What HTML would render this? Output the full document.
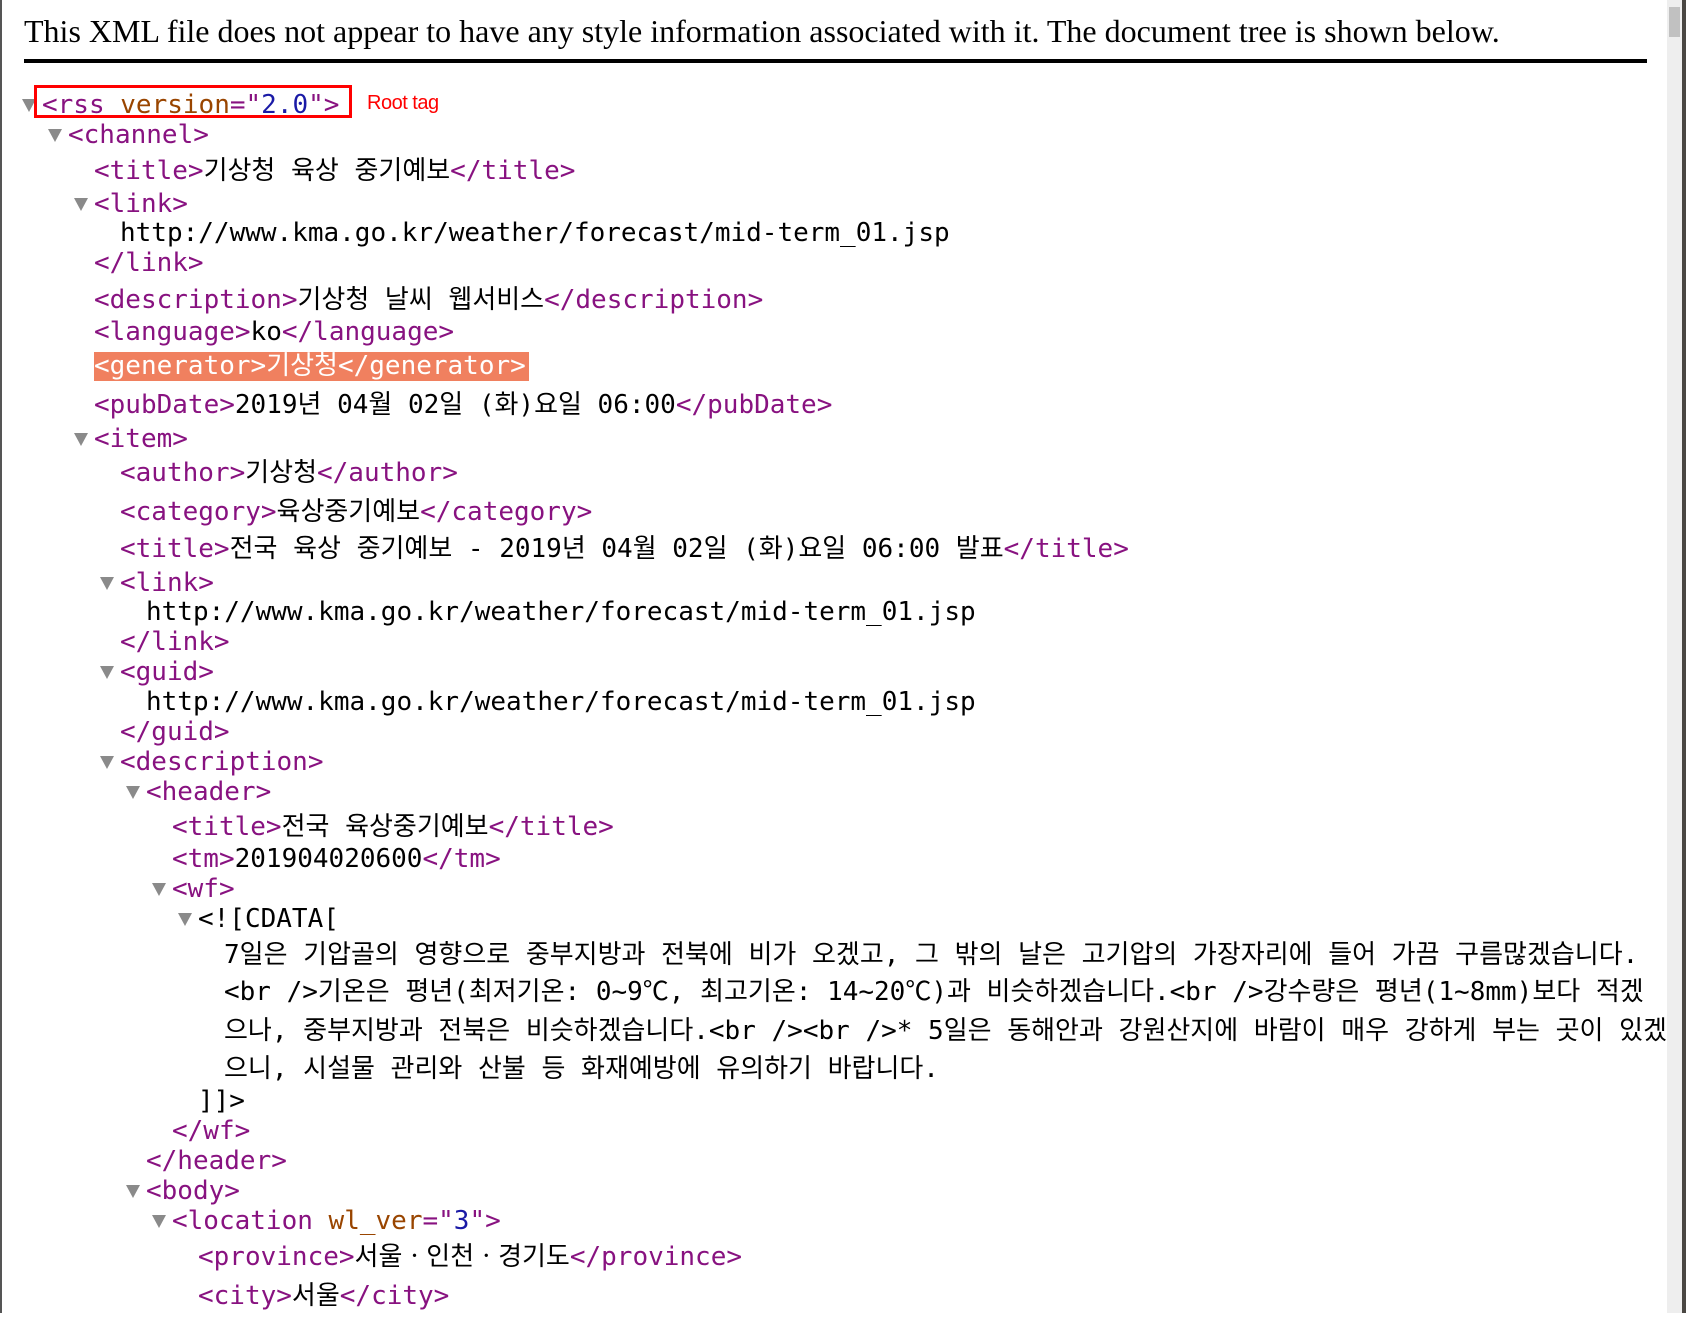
<!DOCTYPE html>
<html><head><meta charset="utf-8">
<style>
html,body{margin:0;padding:0;background:#fff;width:1686px;height:1327px;overflow:hidden;position:relative}
.hd{position:absolute;left:24px;top:9px;font-family:"Liberation Serif",serif;font-size:32px;line-height:44px;color:#000;white-space:nowrap}
.rule{position:absolute;left:24px;top:59px;width:1623px;height:4px;background:#000}
.l{position:absolute;height:32px;line-height:32px;margin-top:2px;font-family:"DejaVu Sans Mono","Liberation Mono","Noto Sans CJK KR",monospace;font-size:26px;white-space:nowrap;color:#000}
.t{color:#881280}
.an{color:#994500}
.av{color:#1a1aa6}
.tri{position:absolute;width:0;height:0;margin-top:1px;border-left:7px solid transparent;border-right:7px solid transparent;border-top:13px solid #8a8a8a}
.k{font-family:"DejaVu Sans Mono","Noto Sans CJK KR",monospace}
.box{position:absolute;left:34px;top:85px;width:312px;height:27px;border:3px solid #f00}
.root{position:absolute;left:367px;top:92px;font-family:"Liberation Sans",sans-serif;font-size:20px;color:#f00;white-space:nowrap;letter-spacing:-0.5px}
.hl{background:#f0805f;color:#fff}
.hl .t{color:#fff}
.lb{position:absolute;left:0;top:0;width:2px;height:1313px;background:#555}
.sb{position:absolute;left:1667px;top:0;width:15px;height:1313px;background:#eee}
.th{position:absolute;left:1669px;top:7px;width:11px;height:30px;background:#c1c1c1}
.rb{position:absolute;left:1682px;top:0;width:4px;height:1313px;background:#4a4743}
</style></head><body>
<div class="lb"></div>
<div class="hd">This XML file does not appear to have any style information associated with it. The document tree is shown below.</div>
<div class="rule"></div>

<div class="tri" style="left:22px;top:98px"></div>
<div class="l" style="left:42px;top:87px"><span class="t">&lt;rss </span><span class="an">version</span><span class="t">="</span><span class="av">2.0</span><span class="t">"&gt;</span></div>
<div class="box"></div>
<div class="root">Root tag</div>

<div class="tri" style="left:48px;top:128px"></div>
<div class="l" style="left:68px;top:117px"><span class="t">&lt;channel&gt;</span></div>
<div class="l" style="left:94px;top:153px"><span class="t">&lt;title&gt;</span><span class="k">기상청 육상 중기예보</span><span class="t">&lt;/title&gt;</span></div>
<div class="tri" style="left:74px;top:197px"></div>
<div class="l" style="left:94px;top:186px"><span class="t">&lt;link&gt;</span></div>
<div class="l" style="left:120px;top:215px">http://www.kma.go.kr/weather/forecast/mid-term_01.jsp</div>
<div class="l" style="left:94px;top:245px"><span class="t">&lt;/link&gt;</span></div>
<div class="l" style="left:94px;top:282px"><span class="t">&lt;description&gt;</span><span class="k">기상청 날씨 웹서비스</span><span class="t">&lt;/description&gt;</span></div>
<div class="l" style="left:94px;top:314px"><span class="t">&lt;language&gt;</span>ko<span class="t">&lt;/language&gt;</span></div>
<div class="l hl" style="left:94px;top:350px;height:29px;line-height:29px;padding-right:3px"><span class="t">&lt;generator&gt;</span><span class="k">기상청</span><span class="t">&lt;/generator&gt;</span></div>
<div class="l" style="left:94px;top:387px"><span class="t">&lt;pubDate&gt;</span><span class="k">2019년 04월 02일 (화)요일 06:00</span><span class="t">&lt;/pubDate&gt;</span></div>
<div class="tri" style="left:74px;top:432px"></div>
<div class="l" style="left:94px;top:421px"><span class="t">&lt;item&gt;</span></div>
<div class="l" style="left:120px;top:455px"><span class="t">&lt;author&gt;</span><span class="k">기상청</span><span class="t">&lt;/author&gt;</span></div>
<div class="l" style="left:120px;top:494px"><span class="t">&lt;category&gt;</span><span class="k">육상중기예보</span><span class="t">&lt;/category&gt;</span></div>
<div class="l" style="left:120px;top:531px"><span class="t">&lt;title&gt;</span><span class="k">전국 육상 중기예보 - 2019년 04월 02일 (화)요일 06:00 발표</span><span class="t">&lt;/title&gt;</span></div>
<div class="tri" style="left:100px;top:576px"></div>
<div class="l" style="left:120px;top:565px"><span class="t">&lt;link&gt;</span></div>
<div class="l" style="left:146px;top:594px">http://www.kma.go.kr/weather/forecast/mid-term_01.jsp</div>
<div class="l" style="left:120px;top:624px"><span class="t">&lt;/link&gt;</span></div>
<div class="tri" style="left:100px;top:665px"></div>
<div class="l" style="left:120px;top:654px"><span class="t">&lt;guid&gt;</span></div>
<div class="l" style="left:146px;top:684px">http://www.kma.go.kr/weather/forecast/mid-term_01.jsp</div>
<div class="l" style="left:120px;top:714px"><span class="t">&lt;/guid&gt;</span></div>
<div class="tri" style="left:100px;top:755px"></div>
<div class="l" style="left:120px;top:744px"><span class="t">&lt;description&gt;</span></div>
<div class="tri" style="left:126px;top:785px"></div>
<div class="l" style="left:146px;top:774px"><span class="t">&lt;header&gt;</span></div>
<div class="l" style="left:172px;top:809px"><span class="t">&lt;title&gt;</span><span class="k">전국 육상중기예보</span><span class="t">&lt;/title&gt;</span></div>
<div class="l" style="left:172px;top:841px"><span class="t">&lt;tm&gt;</span>201904020600<span class="t">&lt;/tm&gt;</span></div>
<div class="tri" style="left:152px;top:882px"></div>
<div class="l" style="left:172px;top:871px"><span class="t">&lt;wf&gt;</span></div>
<div class="tri" style="left:178px;top:912px"></div>
<div class="l" style="left:198px;top:901px">&lt;![CDATA[</div>
<div class="l k" style="left:224px;top:937px">7일은 기압골의 영향으로 중부지방과 전북에 비가 오겠고, 그 밖의 날은 고기압의 가장자리에 들어 가끔 구름많겠습니다.</div>
<div class="l k" style="left:224px;top:974px">&lt;br /&gt;기온은 평년(최저기온: 0~9℃, 최고기온: 14~20℃)과 비슷하겠습니다.&lt;br /&gt;강수량은 평년(1~8mm)보다 적겠</div>
<div class="l k" style="left:224px;top:1013px">으나, 중부지방과 전북은 비슷하겠습니다.&lt;br /&gt;&lt;br /&gt;* 5일은 동해안과 강원산지에 바람이 매우 강하게 부는 곳이 있겠</div>
<div class="l k" style="left:224px;top:1051px">으니, 시설물 관리와 산불 등 화재예방에 유의하기 바랍니다.</div>
<div class="l" style="left:198px;top:1083px">]]&gt;</div>
<div class="l" style="left:172px;top:1113px"><span class="t">&lt;/wf&gt;</span></div>
<div class="l" style="left:146px;top:1143px"><span class="t">&lt;/header&gt;</span></div>
<div class="tri" style="left:126px;top:1184px"></div>
<div class="l" style="left:146px;top:1173px"><span class="t">&lt;body&gt;</span></div>
<div class="tri" style="left:152px;top:1214px"></div>
<div class="l" style="left:172px;top:1203px"><span class="t">&lt;location </span><span class="an">wl_ver</span><span class="t">="</span><span class="av">3</span><span class="t">"&gt;</span></div>
<div class="l" style="left:198px;top:1239px"><span class="t">&lt;province&gt;</span><span class="k">서울ㆍ인천ㆍ경기도</span><span class="t">&lt;/province&gt;</span></div>
<div class="l" style="left:198px;top:1278px"><span class="t">&lt;city&gt;</span><span class="k">서울</span><span class="t">&lt;/city&gt;</span></div>

<div class="sb"></div>
<div class="th"></div>
<div class="rb"></div>
</body></html>
